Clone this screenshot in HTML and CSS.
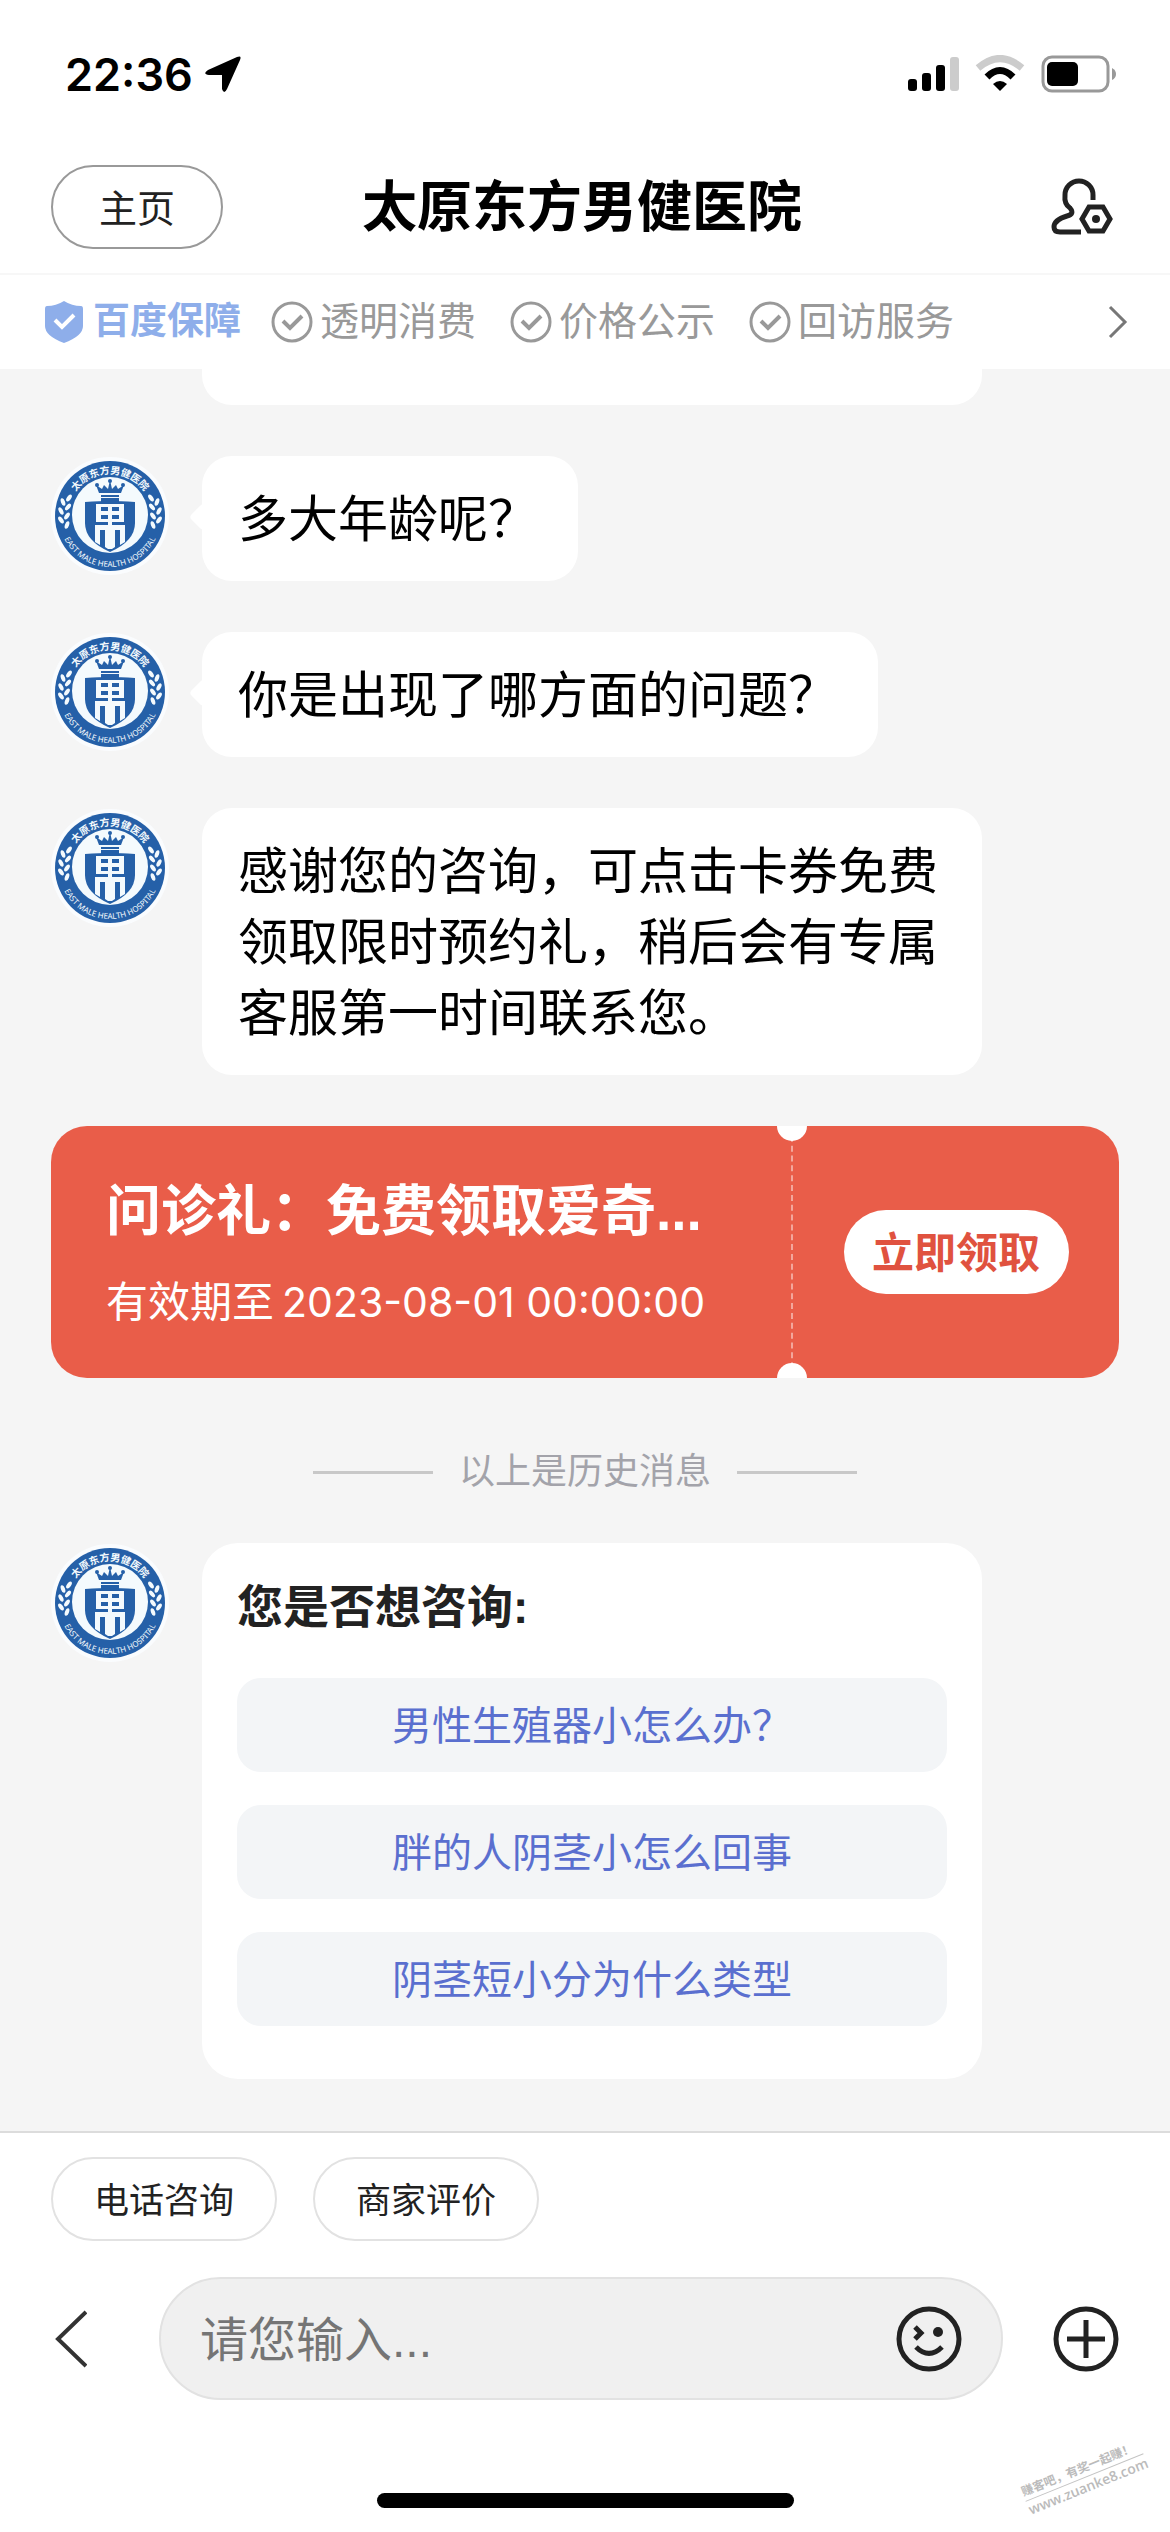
FILE: index.html
```html
<!DOCTYPE html>
<html lang="zh-CN">
  <head>
    <meta charset="UTF-8" />
    <meta name="viewport" content="width=device-width, initial-scale=1.0" />
    <title>太原东方男健医院</title>
    <link rel="stylesheet" href="styles.css">
  </head>
  <body>
    <div class="status-bar">
      <span class="time">22:36</span>
      <svg class="location" viewBox="0 0 36 36" width="36" height="36"><path d="M32 1Q37-1 35 4L22 33q-3 6-5 0V19H4q-7-1-1-5z" /></svg>
      <svg class="signal" viewBox="0 0 210 38" width="210" height="38">
        <rect x="0" y="24" width="9" height="12" rx="3" />
        <rect x="14" y="18" width="9" height="18" rx="3" />
        <rect x="28" y="10" width="9" height="26" rx="3" />
        <rect x="42" y="2" width="9" height="34" rx="3" fill="#ccc" />
        <path d="M70 13Q92-6 114 13" fill="none" stroke="#ccc" stroke-width="7" />
        <path d="M79 22Q92 9 105 22" fill="none" stroke="#000" stroke-width="7" />
        <path d="M85 29q7-6 14 0l-7 7z" />
        <rect x="135" y="2" width="65" height="34" rx="9" fill="none" stroke="#999" stroke-width="3" />
        <rect x="139" y="7" width="31" height="24" rx="5" />
        <path d="M204 13q4 2 4 6t-4 6z" fill="#999" />
      </svg>
    </div>

    <header class="nav">
      <div class="nav-side"><button class="pill home">主页</button></div>
      <h1>太原东方男健医院</h1>
      <div class="nav-side end">
        <button class="icon-btn" aria-label="个人设置">
          <svg viewBox="0 0 62 58" width="62" height="58" fill="none" stroke="#222" stroke-width="5">
            <path d="M42 22V17A14 14 0 0 0 14 17Q13 26 19 30 24 36 16 38 3 42 3 49 3 54 9 54H30" />
            <path d="M38 29H52L59 41 52 53H38L31 41z" />
            <circle cx="45" cy="41" r="4" fill="#222" stroke="none" />
          </svg>
        </button>
      </div>
    </header>

    <div class="guarantee">
      <span class="brand">
        <svg viewBox="0 0 38 42" width="38" height="42"><path d="M19 0q8 5 17 5 2 0 2 3v17q0 10-19 17Q0 35 0 25V8q0-3 2-3 9 0 17-5z" fill="#8eaeea" /><path d="M10 19l7 7 12-12" fill="none" stroke="#fff" stroke-width="4" /></svg>
        百度保障
      </span>
      <span class="promise">
        <svg width="42" height="42">
          <g id="tick" fill="none" stroke="#999">
            <circle cx="21" cy="21" r="19" stroke-width="3" />
            <path d="M12 20l7 7 12-12" stroke-width="4" />
          </g>
        </svg>
        透明消费
      </span>
      <span class="promise"><svg width="42" height="42"><use href="#tick" /></svg>价格公示</span>
      <span class="promise"><svg width="42" height="42"><use href="#tick" /></svg>回访服务</span>
      <svg class="more" viewBox="0 0 20 34" width="20" height="34"><path d="M2 2l15 15L2 32" fill="none" stroke="#777" stroke-width="3" /></svg>
    </div>

    <main class="chat">
      <div class="bubble previous"></div>

      <div class="message">
        <!-- 医院徽标，其余消息复用 -->
        <svg class="avatar" viewBox="1 0 120 120">
          <g id="logo">
            <circle cx="60" cy="60" r="59" fill="#fafcfe" />
            <circle cx="60" cy="60" r="55" fill="#2560a8" />
            <circle cx="60" cy="59" r="38" fill="#f4fafd" />
            <path id="arcTop" d="M18 60 A42 42 0 0 1 102 60" fill="none" />
            <path id="arcBottom" d="M9 60 A51 51 0 0 0 111 60" fill="none" />
            <text class="logo-cn"><textPath href="#arcTop" startOffset="50%">太原东方男健医院</textPath></text>
            <text class="logo-en"><textPath href="#arcBottom" startOffset="50%">EAST MALE HEALTH HOSPITAL</textPath></text>
            <g fill="#f4fafd">
              <g id="wheat">
                <ellipse cx="19" cy="42" rx="2" ry="4" transform="rotate(35 19 42)" />
                <ellipse cx="13" cy="46" rx="2" ry="4" transform="rotate(-20 13 46)" />
                <ellipse cx="18" cy="51" rx="2" ry="4" transform="rotate(40 18 51)" />
                <ellipse cx="11" cy="55" rx="2" ry="4" transform="rotate(-28 11 55)" />
                <ellipse cx="17" cy="60" rx="2" ry="4" transform="rotate(35 17 60)" />
                <ellipse cx="11" cy="64" rx="2" ry="4" transform="rotate(-35 11 64)" />
                <ellipse cx="17" cy="69" rx="2" ry="4" transform="rotate(20 17 69)" />
              </g>
              <use href="#wheat" transform="translate(120 0) scale(-1 1)" />
            </g>
            <g fill="#2560a8">
              <path d="M49 37l-3-8 6 4 2-4 4 4 2-9 2 9 4-4 2 4 6-4-3 8z" />
              <circle cx="47" cy="29" r="2" /><circle cx="73" cy="29" r="2" /><circle cx="60" cy="25" r="2" />
              <path d="M51 39h18v2H51zM51 42h18v4H51z" />
              <path d="M35 46q15-1 25-1 10 0 25 1v21q0 18-25 29-25-11-25-29z" />
            </g>
            <!-- 盾牌中的图案 -->
            <g fill="#f4fafd">
              <path d="M46 48h28v18H46z" />
              <path d="M45 69h30v17l-5 3V74h-5v17l-3 2V74h-4v19l-3-2V74h-5v15l-5-3z" />
              <path d="M58 64h4v29h-4z" />
            </g>
            <path d="M51 51h7v4h-7zM62 51h7v4h-7zM51 59h7v4h-7zM62 59h7v4h-7z" fill="#2560a8" />
          </g>
        </svg>
        <p class="bubble tail">多大年龄呢？</p>
      </div>
      <div class="message">
        <svg class="avatar" viewBox="1 0 120 120"><use href="#logo" /></svg>
        <p class="bubble tail">你是出现了哪方面的问题？</p>
      </div>
      <div class="message">
        <svg class="avatar" viewBox="1 0 120 120"><use href="#logo" /></svg>
        <p class="bubble">感谢您的咨询，可点击卡券免费领取限时预约礼，稍后会有专属客服第一时间联系您。</p>
      </div>

      <section class="coupon">
        <div class="coupon-info">
          <h2>问诊礼：免费领取爱奇...</h2>
          <p>有效期至<time>2023-08-01 00:00:00</time></p>
        </div>
        <div class="coupon-action">
          <button class="claim">立即领取</button>
        </div>
      </section>

      <p class="history">以上是历史消息</p>

      <div class="message">
        <svg class="avatar" viewBox="1 0 120 120"><use href="#logo" /></svg>
        <div class="bubble questions">
          <h3>您是否想咨询:</h3>
          <button>男性生殖器小怎么办？</button>
          <button>胖的人阴茎小怎么回事</button>
          <button>阴茎短小分为什么类型</button>
        </div>
      </div>
    </main>

    <footer class="composer">
      <div class="shortcuts">
        <button class="pill">电话咨询</button>
        <button class="pill">商家评价</button>
      </div>
      <div class="input-row">
        <button class="icon-btn back" aria-label="返回">
          <svg viewBox="0 0 36 58" width="36" height="58"><path d="M35 2L7 29l28 27" fill="none" stroke="#333" stroke-width="4" /></svg>
        </button>
        <div class="input-box">
          <input type="text" aria-label="请您输入" placeholder="请您输入..." />
          <button class="icon-btn" aria-label="表情">
            <svg viewBox="0 0 66 66" width="66" height="66" fill="none" stroke="#222" stroke-width="5">
              <circle cx="33" cy="33" r="30" />
              <path d="M19 21l6 6-6 6M20 41q13 13 26 0" />
              <circle cx="42" cy="26" r="5" fill="#222" stroke="none" />
            </svg>
          </button>
        </div>
        <button class="icon-btn" aria-label="更多">
          <svg viewBox="0 0 66 66" width="66" height="66" fill="none" stroke="#222" stroke-width="5">
            <circle cx="33" cy="33" r="30" />
            <path d="M33 14v38M14 33h38" />
          </svg>
        </button>
      </div>
      <div class="home-indicator"></div>
    </footer>

    <div class="watermark">
      <span>赚客吧，有奖一起赚！</span>
      <span class="site">www.zuanke8.com</span>
    </div>
  </body>
</html>
```

FILE: styles.css
```css
* {
  box-sizing: border-box;
}

body {
  margin: 0;
  min-height: 100vh;
  display: flex;
  flex-direction: column;
  position: relative;
  overflow-x: hidden;
  background-color: #fff;
  color: #000;
  font-family: "Liberation Sans", "Noto Sans CJK SC", sans-serif;
}

h1, h2, h3, p {
  margin: 0;
}

button {
  padding: 0;
  border: none;
  background: none;
  font-family: inherit;
  cursor: pointer;
}

svg {
  display: block;
  flex: none;
}

/* 状态栏 */
.status-bar {
  display: flex;
  align-items: center;
  height: 148px;
  padding: 0 52px 0 65px;
}

.time {
  font-family: Inter, sans-serif;
  font-size: 45px;
  font-weight: 600;
}

.location {
  margin-left: 12px;
}

.signal {
  margin-left: auto;
}

/* 顶部导航 */
.nav {
  display: flex;
  align-items: center;
  height: 127px;
  padding: 0 51px 7px;
  border-bottom: 2px solid #f7f7f7;
}

.nav-side {
  flex: 1;
  display: flex;
}

.nav-side.end {
  justify-content: flex-end;
  padding-right: 6px;
}

.nav h1 {
  font-size: 55px;
  font-weight: 700;
  line-height: 80px;
}

.pill {
  height: 84px;
  padding: 0 41px 4px;
  border: 2px solid #e2e2e2;
  border-radius: 42px;
  color: #222;
  font-size: 35px;
}

.pill.home {
  padding: 0 46px 4px;
  border-color: #999;
  font-size: 38px;
}

.guarantee {
  display: flex;
  align-items: center;
  gap: 34px;
  height: 94px;
  padding: 0 42px 0 45px;
  color: #999;
  font-size: 39px;
  line-height: 58px;
}

.brand,
.promise {
  display: flex;
  align-items: center;
  gap: 7px;
  white-space: nowrap;
}

.brand {
  gap: 10px;
  margin-right: -4px;
  color: #8eaeea;
  font-size: 37px;
  font-weight: 700;
}

.more {
  margin-left: auto;
}

/* 聊天内容 */
.chat {
  flex: 1;
  display: flex;
  flex-direction: column;
  gap: 51px;
  padding: 0 51px 51px;
  background-color: #f5f5f5;
}

.message {
  display: flex;
  align-items: flex-start;
  gap: 31px;
}

.avatar {
  width: 120px;
  height: 120px;
}

.logo-cn,
.logo-en {
  fill: #f4fafd;
  text-anchor: middle;
}

.logo-cn {
  font-size: 10px;
  font-weight: 700;
}

.logo-en {
  font-family: "Noto Sans", sans-serif;
  font-size: 8px;
}

.bubble {
  position: relative;
  max-width: 780px;
  padding: 29px 40px 25px 36px;
  border-radius: 30px;
  background-color: #fff;
  font-size: 50px;
  line-height: 71px;
}

.bubble.tail::before {
  content: "";
  position: absolute;
  left: -9px;
  top: 51px;
  width: 20px;
  height: 20px;
  border-radius: 4px;
  background-color: #fff;
  transform: rotate(45deg);
}

.bubble.previous {
  width: 780px;
  height: 36px;
  margin-left: 151px;
  padding: 0;
  border-radius: 0 0 30px 30px;
}

/* 卡券 */
.coupon {
  display: flex;
  height: 252px;
  border-radius: 36px;
  overflow: hidden;
  background-color: #e95d49;
  color: #fff;
}

.coupon-info {
  flex: 1;
  min-width: 0;
  padding: 45px 40px 0 55px;
}

.coupon-info h2 {
  overflow: hidden;
  white-space: nowrap;
  text-overflow: ellipsis;
  font-size: 55px;
  font-weight: 700;
  line-height: 80px;
}

.coupon-info p {
  margin-top: 21px;
  font-size: 42px;
  line-height: 60px;
  white-space: nowrap;
}

.coupon-info time {
  margin-left: 8px;
  font-family: Inter, sans-serif;
  font-size: 41px;
}

.coupon-action {
  position: relative;
  display: flex;
  align-items: center;
  justify-content: center;
  width: 328px;
  border-left: 2px dashed #f3a79c;
}

.coupon-action::before,
.coupon-action::after {
  content: "";
  position: absolute;
  left: -16px;
  width: 30px;
  height: 30px;
  border-radius: 50%;
  background-color: #fff;
}

.coupon-action::before {
  top: -15px;
}

.coupon-action::after {
  bottom: -15px;
}

.claim {
  width: 225px;
  height: 84px;
  padding-bottom: 6px;
  border-radius: 42px;
  background-color: #fff;
  color: #e0523f;
  font-size: 42px;
  font-weight: 700;
}

.history {
  display: flex;
  align-items: center;
  justify-content: center;
  gap: 26px;
  margin-top: 23px;
  color: #a3a3aa;
  font-size: 36px;
  line-height: 40px;
}

.history::before,
.history::after {
  content: "";
  width: 120px;
  height: 3px;
  background-color: #c8c8c8;
}

/* 猜你想问 */
.bubble.questions {
  flex: 1;
  display: flex;
  flex-direction: column;
  gap: 33px;
  padding: 29px 35px 53px;
  border-radius: 36px;
}

.questions h3 {
  margin-bottom: 2px;
  color: #222;
  font-size: 46px;
  font-weight: 700;
}

.questions button {
  height: 94px;
  padding-bottom: 4px;
  border-radius: 24px;
  background-color: #f3f5f7;
  color: #5a6fcf;
  font-size: 40px;
}

/* 底部输入 */
.composer {
  padding: 24px 51px;
  border-top: 2px solid #dcdcdc;
}

.shortcuts {
  display: flex;
  gap: 36px;
}

.input-row {
  display: flex;
  align-items: center;
  margin-top: 36px;
}

.back {
  margin-right: 72px;
}

.input-box {
  flex: 1;
  display: flex;
  align-items: center;
  height: 123px;
  margin-right: 50px;
  padding: 0 39px;
  border: 2px solid #e2e2e2;
  border-radius: 62px;
  background-color: #f0f0f0;
}

.input-box input {
  flex: 1;
  min-width: 0;
  padding: 4px 0 0;
  border: none;
  outline: none;
  background: none;
  font-family: inherit;
  font-size: 48px;
}

.input-box input::placeholder {
  color: #757575;
}

.home-indicator {
  width: 417px;
  height: 15px;
  margin: 93px auto 0;
  border-radius: 8px;
  background-color: #000;
}

.watermark {
  position: absolute;
  right: 22px;
  bottom: 36px;
  display: flex;
  flex-direction: column;
  color: #bbb;
  font-size: 12px;
  font-weight: 700;
  line-height: 18px;
  transform: rotate(-22deg);
}

.watermark .site {
  border-top: 1px solid #c4c4c4;
  font-family: "Open Sans", sans-serif;
  font-size: 14px;
  font-weight: 600;
}
```
